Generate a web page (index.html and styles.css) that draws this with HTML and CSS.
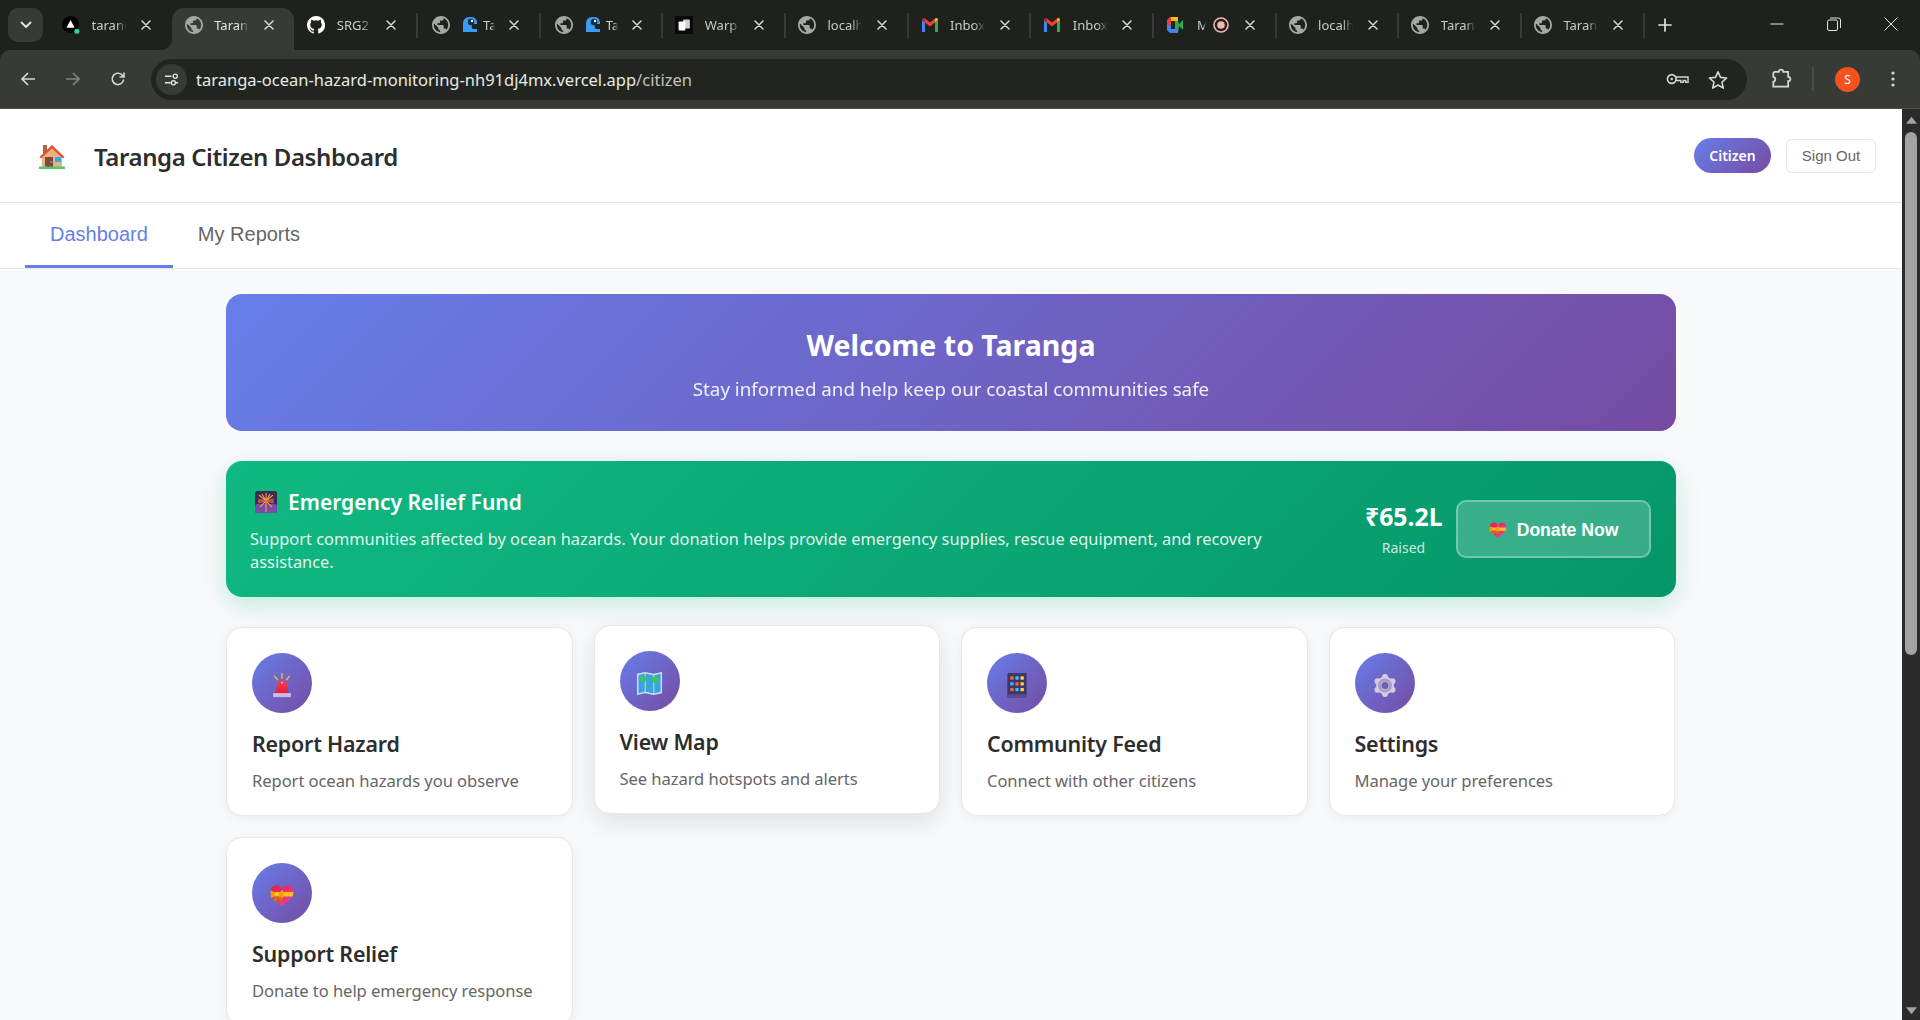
FILE: index.html
```html
<!DOCTYPE html>
<html lang="en">
<head>
<meta charset="utf-8">
<title>Taranga Citizen Dashboard</title>
<link rel="stylesheet" href="styles.css">
</head>
<body>
<svg class="defs" aria-hidden="true">
  <defs>
    <symbol id="globe" viewBox="2 2 20 20">
      <path fill="#a6a8a6" fill-rule="evenodd" d="M12 2C6.480 2 2 6.480 2 12s4.480 10 10 10 10-4.480 10-10S17.520 2 12 2zm-1 17.930c-3.950-.490-7-3.850-7-7.930 0-.620.080-1.210.210-1.790L9 15v1c0 1.100.900 2 2 2v1.930zm6.900-2.540c-.260-.810-1-1.390-1.900-1.390h-1v-3c0-.550-.450-1-1-1H8v-2h2c.550 0 1-.450 1-1V7h2c1.100 0 2-.900 2-2v-.410c2.930 1.190 5 4.060 5 7.410 0 2.080-.800 3.970-2.100 5.390z"/>
    </symbol>
    <symbol id="close" viewBox="0 0 10 10">
      <path d="M1 1 9 9M9 1 1 9" stroke="#d8dad6" stroke-width="1.500" stroke-linecap="round" fill="none"/>
    </symbol>
    <symbol id="bird" viewBox="0 0 16 16">
      <path d="M1 15V6a6 6 0 0 1 6-6h2a6 6 0 0 1 6 5v2h-4a3 3 0 0 0 0 5h4v3Z" fill="#3b9bf0"/>
      <circle cx="9" cy="5" r="3.200" fill="#0e2a44"/>
      <circle cx="10" cy="4" r="1.200" fill="#fff"/>
    </symbol>
    <symbol id="gmail" viewBox="0 0 18 16">
      <path d="M1 15V3l3 2.400V15Z" fill="#4285f4"/>
      <path d="M14 15V5.400L17 3v12Z" fill="#34a853"/>
      <path d="M4 5.400 9 9.400 14 5.400V1.600L9 5.500 4 1.600Z" fill="#ea4335"/>
      <path d="M1 3C1 1 3 .600 4 1.600V5.400Z" fill="#c5221f"/>
      <path d="M17 3C17 1 15 .600 14 1.600V5.400Z" fill="#fbbc04"/>
    </symbol>
    <symbol id="heart" viewBox="0 0 24 22">
      <path d="M12 21.500C5 16.500.500 12.500.500 7A6 6 0 0 1 12 4.500 6 6 0 0 1 23.500 7C23.500 12.500 19 16.500 12 21.500Z" fill="url(#heartFill)"/>
      <path d="M.600 7.500H23.400L22.900 12H1.400Z" fill="#fbbf24"/>
      <path d="M7 9.700 .800 5.500V14ZM7 9.700 13 5V14.500Z" fill="#f59e0b"/>
      <path d="M6.500 10 2.500 17 5.500 16 6.500 18 7.500 12 10.500 17.500 11.500 15.500 13 16Z" fill="#d97706"/>
      <circle cx="7" cy="9.700" r="1.600" fill="#fcd34d"/>
    </symbol>
    <linearGradient id="heartFill" x1="0" y1="0" x2="1" y2="1">
      <stop offset="0" stop-color="#e11d48"/>
      <stop offset="1" stop-color="#ec4899"/>
    </linearGradient>
    <linearGradient id="sirenFill" x1="0" y1="0" x2="0" y2="1">
      <stop offset="0" stop-color="#ff3b4e"/>
      <stop offset="1" stop-color="#dc1f3c"/>
    </linearGradient>
  </defs>
</svg>

<div class="browser">
  <div class="tabstrip">
    <button class="tab-search" aria-label="Search tabs">
      <svg width="12" height="8" viewBox="0 0 12 8"><path d="M1.500 1.500 6 6l4.500-4.500" stroke="#e3e5e1" stroke-width="1.800" fill="none" stroke-linecap="round" stroke-linejoin="round"/></svg>
    </button>
    <div class="tabs">
      <div class="tab no-sep">
        <svg class="fav" viewBox="0 0 20 20"><circle cx="9.500" cy="9.500" r="9.500" fill="#000"/><path d="M9.500 4.500 14 13H5Z" fill="#fff"/><circle cx="16.500" cy="17" r="2.800" fill="#2dd4a8"/></svg>
        <span class="tab-title">tarang</span>
        <svg class="tab-x"><use href="#close"/></svg>
      </div>
      <div class="tab active">
        <svg class="fav"><use href="#globe"/></svg>
        <span class="tab-title">Taranga</span>
        <svg class="tab-x"><use href="#close"/></svg>
      </div>
      <div class="tab">
        <svg class="fav" viewBox="0 0 16 16"><path fill="#fff" d="M8 0a8 8 0 0 0-2.530 15.590c.400.070.550-.170.550-.380v-1.340c-2.230.480-2.700-1.070-2.700-1.070-.360-.930-.890-1.170-.890-1.170-.730-.500.060-.490.060-.490.800.060 1.230.830 1.230.830.710 1.220 1.870.870 2.330.660.070-.520.280-.870.510-1.070-1.780-.200-3.640-.890-3.640-3.950 0-.870.310-1.590.820-2.150-.080-.200-.360-1.020.080-2.120 0 0 .670-.210 2.200.820a7.600 7.600 0 0 1 4 0c1.530-1.040 2.200-.820 2.200-.820.440 1.100.160 1.920.080 2.120.510.560.820 1.270.820 2.150 0 3.070-1.870 3.750-3.650 3.950.290.250.540.730.540 1.480v2.200c0 .210.150.460.550.380A8 8 0 0 0 8 0Z"/></svg>
        <span class="tab-title">SRG2</span>
        <svg class="tab-x"><use href="#close"/></svg>
      </div>
      <div class="tab wide-icons">
        <svg class="fav"><use href="#globe"/></svg>
        <svg class="fav second"><use href="#bird"/></svg>
        <span class="tab-title narrow">Taranga</span>
        <svg class="tab-x"><use href="#close"/></svg>
      </div>
      <div class="tab wide-icons">
        <svg class="fav"><use href="#globe"/></svg>
        <svg class="fav second"><use href="#bird"/></svg>
        <span class="tab-title narrow">Taranga</span>
        <svg class="tab-x"><use href="#close"/></svg>
      </div>
      <div class="tab">
        <svg class="fav" viewBox="0 0 20 20"><rect width="20" height="20" fill="#0a0a0a"/><rect x="9" y="4" width="7.500" height="10" rx="1" fill="#cfcfcf"/><rect x="4" y="6" width="7.500" height="10" rx="1" fill="#fff"/></svg>
        <span class="tab-title">Warp</span>
        <svg class="tab-x"><use href="#close"/></svg>
      </div>
      <div class="tab">
        <svg class="fav"><use href="#globe"/></svg>
        <span class="tab-title">localhost</span>
        <svg class="tab-x"><use href="#close"/></svg>
      </div>
      <div class="tab">
        <svg class="fav"><use href="#gmail"/></svg>
        <span class="tab-title">Inbox</span>
        <svg class="tab-x"><use href="#close"/></svg>
      </div>
      <div class="tab">
        <svg class="fav"><use href="#gmail"/></svg>
        <span class="tab-title">Inbox</span>
        <svg class="tab-x"><use href="#close"/></svg>
      </div>
      <div class="tab">
        <svg class="fav" viewBox="0 0 18 16"><path d="M4 0H12V4H5V8H1V3Z" fill="#ea4335"/><path d="M1 8H5V12H12V16H4L1 13Z" fill="#4285f4"/><path d="M5 0H12V4H5Z" fill="#fbbc04"/><path d="M12 4 13 7 17 3V13L13 9 12 16V12H9V4Z" fill="#34a853"/><path d="M5 4H9V12H5Z" fill="#1e211c"/></svg>
        <span class="tab-title tiny">Meet</span>
        <svg class="rec" viewBox="0 0 16 16"><circle cx="8" cy="8" r="7" fill="none" stroke="#f5b5ae" stroke-width="1.600"/><circle cx="8" cy="8" r="3.800" fill="#f5b5ae"/></svg>
        <svg class="tab-x"><use href="#close"/></svg>
      </div>
      <div class="tab">
        <svg class="fav"><use href="#globe"/></svg>
        <span class="tab-title">localhost</span>
        <svg class="tab-x"><use href="#close"/></svg>
      </div>
      <div class="tab">
        <svg class="fav"><use href="#globe"/></svg>
        <span class="tab-title">Taranga</span>
        <svg class="tab-x"><use href="#close"/></svg>
      </div>
      <div class="tab">
        <svg class="fav"><use href="#globe"/></svg>
        <span class="tab-title">Taranga</span>
        <svg class="tab-x"><use href="#close"/></svg>
      </div>
    </div>
    <svg class="new-tab" viewBox="0 0 14 14"><path d="M7 1v12M1 7h12" stroke="#e3e5e1" stroke-width="1.700" stroke-linecap="round"/></svg>
    <div class="window-controls">
      <svg viewBox="0 0 14 14"><path d="M.500 7h13" stroke="#e3e5e1"/></svg>
      <svg viewBox="0 0 14 14"><rect x=".500" y="3" width="10" height="10.500" rx="1.500" fill="none" stroke="#e3e5e1"/><path d="M3 1H11.500A2 2 0 0 1 13.500 3V11" fill="none" stroke="#e3e5e1"/></svg>
      <svg viewBox="0 0 14 14"><path d="M.500.500l13 13M13.500.500l-13 13" stroke="#e3e5e1"/></svg>
    </div>
  </div>

  <div class="toolbar">
    <div class="nav-buttons">
      <svg viewBox="0 0 16 16"><path d="M15 8H2M8 2 2 8l6 6" stroke="#d5d7d3" stroke-width="1.700" fill="none"/></svg>
      <svg viewBox="0 0 16 16"><path d="M1 8H14M8 2l6 6-6 6" stroke="#80837e" stroke-width="1.700" fill="none"/></svg>
      <svg viewBox="0 0 16 16"><path d="M13.600 8.500A5.700 5.700 0 1 1 11.800 3.700L14 6M14 1.500V6H9.500" stroke="#d5d7d3" stroke-width="1.600" fill="none"/></svg>
    </div>
    <div class="omnibox">
      <span class="site-info">
        <svg viewBox="0 0 16 16"><path d="M1 4.500H8M12 11.500H15M1 11.500H7" stroke="#e3e5e1" stroke-width="1.500"/><circle cx="12" cy="4.500" r="2.200" fill="none" stroke="#e3e5e1" stroke-width="1.400"/><circle cx="10" cy="11.500" r="2.200" fill="none" stroke="#e3e5e1" stroke-width="1.400"/></svg>
      </span>
      <span class="url">taranga-ocean-hazard-monitoring-nh91dj4mx.vercel.app<span class="url-path">/citizen</span></span>
      <svg class="omni-key" viewBox="0 0 24 14"><circle cx="6" cy="7" r="4.500" fill="none" stroke="#d5d7d3" stroke-width="1.700"/><circle cx="6" cy="7" r="1.300" fill="#d5d7d3"/><path d="M10.500 5H23V10.500H20.500V8.500H18V10.500H15.500V8.500H10.500" fill="none" stroke="#d5d7d3" stroke-width="1.500"/></svg>
      <svg class="omni-star" viewBox="0 0 20 20"><path d="M10 1.800 12.500 7.400 18.600 8 14 12.100 15.300 18.100 10 15 4.700 18.100 6 12.100 1.400 8 7.500 7.400Z" fill="none" stroke="#d5d7d3" stroke-width="1.600" stroke-linejoin="round"/></svg>
    </div>
    <div class="toolbar-end">
      <svg class="ext" viewBox="0 0 20 20"><path d="M7 3.500H8A2 2 0 0 1 12 3.500H16.500V8A2 2 0 0 1 16.500 12V17H3V12.500A2.300 2.300 0 0 0 3 8V5A1.500 1.500 0 0 1 4.500 3.500Z" fill="none" stroke="#d5d7d3" stroke-width="1.600"/></svg>
      <span class="tool-sep"></span>
      <span class="avatar">S</span>
      <svg class="menu-dots" viewBox="0 0 4 16"><circle cx="2" cy="2" r="1.600" fill="#d5d7d3"/><circle cx="2" cy="8" r="1.600" fill="#d5d7d3"/><circle cx="2" cy="14" r="1.600" fill="#d5d7d3"/></svg>
    </div>
  </div>

  <div class="viewport">
    <div class="page">
      <header class="app-header">
        <div class="brand">
          <svg class="brand-icon" viewBox="0 0 26 25">
            <rect x="4" y="1" width="4" height="8" fill="#a9673f"/>
            <path d="M3 12 13 3 23 12V23H3Z" fill="#e9b383"/>
            <path d="M.500 13 13 1 25.500 13 24 14.500 13 4.500 2 14.500Z" fill="#e5532d"/>
            <rect x="6" y="13" width="8" height="10" fill="#7b4a3c"/>
            <circle cx="12" cy="18" r=".800" fill="#e9b383"/>
            <rect x="16" y="13" width="6" height="5" fill="#35a9ee"/>
            <rect y="22.500" width="26" height="2.500" fill="#4ccc6f"/>
          </svg>
          <h1 class="brand-title">Taranga Citizen Dashboard</h1>
        </div>
        <div class="user-area">
          <span class="role-pill">Citizen</span>
          <button class="sign-out">Sign Out</button>
        </div>
      </header>

      <nav class="app-nav">
        <button class="nav-tab current">Dashboard</button>
        <button class="nav-tab">My Reports</button>
      </nav>

      <main class="content">
        <section class="welcome">
          <h2 class="welcome-title">Welcome to Taranga</h2>
          <p class="welcome-sub">Stay informed and help keep our coastal communities safe</p>
        </section>

        <section class="relief">
          <div class="relief-text">
            <h3 class="relief-title">
              <svg class="firework" viewBox="0 0 22 22">
                <rect width="22" height="22" rx="2.500" fill="#3d2a55"/>
                <rect y="13" width="22" height="9" rx="2" fill="#7c4aa8"/>
                <path d="M11 21V10M11 10 4 4M11 10 18 4M11 10 3 10M11 10 19 10M11 10 11 2M11 10 5 16M11 10 17 16M11 10 7 3M11 10 15 3" stroke="#e9a23b" stroke-width="1.100"/>
                <path d="M3 8 19 12M3 12 19 8" stroke="#f0476e" stroke-width=".900"/>
              </svg>
              Emergency Relief Fund
            </h3>
            <p class="relief-desc">Support communities affected by ocean hazards. Your donation helps provide emergency supplies, rescue equipment, and recovery assistance.</p>
          </div>
          <div class="relief-actions">
            <div class="raised">
              <div class="raised-amount">₹65.2L</div>
              <div class="raised-label">Raised</div>
            </div>
            <button class="donate">
              <svg class="donate-heart"><use href="#heart"/></svg>
              Donate Now
            </button>
          </div>
        </section>

        <section class="cards">
          <article class="card">
            <div class="card-icon">
              <svg class="emoji" viewBox="0 0 24 28">
                <path d="M12 .500V6M3.500 3.500 7 7.500M20.500 3.500 17 7.500" stroke="#fbbf24" stroke-width="1.500" stroke-linecap="round"/>
                <path d="M5 23 6.500 13C7 10 9 8.500 12 8.500S17 10 17.500 13L19 23Z" fill="url(#sirenFill)"/>
                <circle cx="12" cy="11" r="1.100" fill="#ffb3bb"/>
                <rect x="2" y="22.500" width="20" height="4.500" fill="#c9b9e6"/>
              </svg>
            </div>
            <h4 class="card-title">Report Hazard</h4>
            <p class="card-desc">Report ocean hazards you observe</p>
          </article>
          <article class="card raised-card">
            <div class="card-icon">
              <svg class="emoji map" viewBox="0 0 28 25">
                <path d="M1 2.500 9.500 .500 18.500 2.500 27 .500V22.500L18.500 24.500 9.500 22.500 1 24.500Z" fill="#d9dde8"/>
                <path d="M2.500 3.700 9 2.200V21L2.500 22.500ZM10 2.200 18 4V22.800L10 21ZM19 4 25.500 2.500V21L19 22.800Z" fill="#38a3e8"/>
                <path d="M4 6 9 4.500 11 6.500 10 10 8.500 13 6.500 10 4.500 9ZM16 6 22 5 24 8 21.500 11 21 15 18.500 12 15.500 10ZM10 15 12.500 14.500 13 19 11 18Z" fill="#3fc45f"/>
              </svg>
            </div>
            <h4 class="card-title">View Map</h4>
            <p class="card-desc">See hazard hotspots and alerts</p>
          </article>
          <article class="card">
            <div class="card-icon">
              <svg class="emoji" viewBox="0 0 20 26">
                <rect width="20" height="26" rx="1.500" fill="#3f3769"/>
                <rect y="22" width="20" height="4" rx="1" fill="#5c4a92"/>
                <g fill="#f0653a"><rect x="3" y="3.500" width="3.500" height="3.500" rx=".700"/><rect x="3" y="15.500" width="3.500" height="3.500" rx=".700"/></g>
                <g fill="#38bdf8"><rect x="8.300" y="3.500" width="3.500" height="3.500" rx=".700"/><rect x="3" y="9.500" width="3.500" height="3.500" rx=".700"/><rect x="8.300" y="15.500" width="3.500" height="3.500" rx=".700"/></g>
                <g fill="#fcd34d"><rect x="13.600" y="3.500" width="3.500" height="3.500" rx=".700"/><rect x="13.600" y="9.500" width="3.500" height="3.500" rx=".700"/><rect x="13.600" y="15.500" width="3.500" height="3.500" rx=".700"/></g>
                <rect x="8.300" y="9.500" width="3.500" height="3.500" rx=".700" fill="#f0653a"/>
              </svg>
            </div>
            <h4 class="card-title">Community Feed</h4>
            <p class="card-desc">Connect with other citizens</p>
          </article>
          <article class="card">
            <div class="card-icon">
              <svg class="emoji" viewBox="0 0 24 24">
                <g fill="#d3cbe8">
                  <circle cx="12" cy="3.500" r="3"/><circle cx="12" cy="20.500" r="3"/>
                  <circle cx="4.500" cy="7.700" r="3"/><circle cx="19.500" cy="7.700" r="3"/>
                  <circle cx="4.500" cy="16.300" r="3"/><circle cx="19.500" cy="16.300" r="3"/>
                  <circle cx="12" cy="12" r="9"/>
                </g>
                <circle cx="12" cy="12" r="5.500" fill="none" stroke="#a79fbd" stroke-width="3"/>
                <circle cx="12" cy="12" r="3.500" fill="#6d5fb8"/>
              </svg>
            </div>
            <h4 class="card-title">Settings</h4>
            <p class="card-desc">Manage your preferences</p>
          </article>
          <article class="card">
            <div class="card-icon">
              <svg class="emoji"><use href="#heart"/></svg>
            </div>
            <h4 class="card-title">Support Relief</h4>
            <p class="card-desc">Donate to help emergency response</p>
          </article>
        </section>
      </main>
    </div>
    <div class="scrollbar">
      <svg class="scroll-arrow" viewBox="0 0 12 8"><path d="M6 .500 12 8H0Z" fill="#a3a3a3"/></svg>
      <div class="scroll-track"><div class="scroll-thumb"></div></div>
      <svg class="scroll-arrow" viewBox="0 0 12 8"><path d="M6 7.500 12 0H0Z" fill="#a3a3a3"/></svg>
    </div>
  </div>
</div>
</body>
</html>
```
FILE: styles.css
```css
* { box-sizing: border-box; }
html, body { margin: 0; height: 100%; overflow: hidden; }
body { font-family: "Noto Sans", "Open Sans", sans-serif; background: #1e211c; }
.defs { position: absolute; width: 0; height: 0; }

.browser { display: flex; flex-direction: column; height: 1020px; }

/* tab strip */
.tabstrip { display: flex; align-items: flex-start; height: 50px; background: #1e211c; padding-left: 8px; position: relative; }
.tab-search { width: 35px; height: 34px; margin-top: 8px; border: 0; border-radius: 10px; background: #383b35; display: flex; align-items: center; justify-content: center; padding: 0; }
.tabs { display: flex; margin-left: 6px; }
.tab { position: relative; width: 122.670px; height: 42px; margin-top: 8px; display: flex; align-items: center; padding: 0 0 8px 13px; color: #c9cbc7; font-size: 13px; }
.tab::after { content: ""; position: absolute; right: -1px; top: 5px; width: 2px; height: 25px; background: #383b35; }
.tab.no-sep::after, .tab.active::after { display: none; }
.tab.wide-icons { padding-left: 15px; }
.tab.active { background: #383b35; border-radius: 12px 12px 0 0; color: #e3e5e1; }
.tab.active::before { content: ""; position: absolute; left: -12px; bottom: 0; width: 12px; height: 12px; background: radial-gradient(circle at 0 0, transparent 12px, #383b35 12.500px); }
.fav { width: 18px; height: 18px; flex: none; }
.fav.second { width: 16px; height: 16px; margin-left: 12px; }
.tab-title { margin-left: 11.500px; width: 35px; white-space: nowrap; overflow: hidden; flex: none; -webkit-mask-image: linear-gradient(90deg, #000 70%, transparent); mask-image: linear-gradient(90deg, #000 70%, transparent); }
.tab-title.narrow { margin-left: 5px; width: 12px; }
.tab-title.tiny { margin-left: 13px; width: 9px; }
.rec { width: 16px; height: 16px; flex: none; margin-left: 7px; }
.tab-x { width: 10px; height: 10px; position: absolute; left: 92px; top: 12px; }
.new-tab { width: 14px; height: 14px; margin: 18px 0 0 14px; flex: none; }
.window-controls { position: absolute; right: 22px; top: 17px; display: flex; gap: 43px; }
.window-controls svg { width: 14px; height: 14px; }

/* toolbar */
.toolbar { height: 59px; flex: none; background: #383b35; border-radius: 10px 10px 0 0; border-bottom: 1px solid #4a4d47; display: flex; align-items: center; padding: 0 0 0 20px; }
.nav-buttons { display: flex; gap: 29px; width: 131px; flex: none; }
.nav-buttons svg { width: 16px; height: 16px; }
.omnibox { width: 1596px; height: 41px; flex: none; border-radius: 21px; background: #22251f; display: flex; align-items: center; padding-left: 5px; position: relative; }
.site-info { width: 31px; height: 31px; border-radius: 50%; background: #383b35; display: flex; align-items: center; justify-content: center; flex: none; }
.site-info svg { width: 15px; height: 15px; }
.url { margin-left: 9px; font-size: 16.500px; color: #e8eae6; white-space: nowrap; }
.url-path { color: #c0c2be; }
.omni-key { position: absolute; right: 58px; top: 13px; width: 23px; height: 14px; }
.omni-star { position: absolute; right: 19px; top: 11px; width: 20px; height: 20px; }
.toolbar-end { display: flex; align-items: center; flex: none; margin-left: 23px; }
.ext { width: 22px; height: 22px; }
.tool-sep { width: 2px; height: 24px; background: #4c4f49; margin-left: 20px; }
.avatar { width: 25px; height: 25px; margin-left: 21px; border-radius: 50%; background: #f4511e; color: #fff; font-size: 12px; display: flex; align-items: center; justify-content: center; }
.menu-dots { width: 4px; height: 16px; margin-left: 31px; }

/* page */
.viewport { flex: 1; display: flex; min-height: 0; background: #f8f9fa; }
.page { flex: 1; min-width: 0; overflow: hidden; }
.scrollbar { width: 18px; flex: none; background: #2b2b2b; display: flex; flex-direction: column; align-items: center; padding: 7px 0 5px; }
.scroll-arrow { width: 11px; height: 8px; flex: none; }
.scroll-track { flex: 1; width: 100%; padding: 8px 3px 0; }
.scroll-thumb { height: 523px; border-radius: 6px; background: #a3a3a3; }

.app-header { height: 94px; background: #fff; border-bottom: 1px solid #e2e4e8; display: flex; align-items: center; justify-content: space-between; padding: 0 26px 0 39px; }
.brand { display: flex; align-items: center; padding-top: 2px; }
.brand-icon { width: 26px; height: 25px; flex: none; }
.brand-title { margin: 0 0 0 29px; font-size: 24px; font-weight: 600; color: #2d2d2d; letter-spacing: -.400px; }
.user-area { display: flex; align-items: center; gap: 15px; }
.role-pill { width: 77px; height: 35px; border-radius: 18px; background: linear-gradient(135deg, #667eea, #764ba2); color: #fff; font-size: 14px; font-weight: 600; display: flex; align-items: center; justify-content: center; }
.sign-out { width: 90px; height: 34px; border: 1px solid #e5e7eb; border-radius: 6px; background: #fff; color: #666; font-family: "Liberation Sans", sans-serif; font-size: 15px; padding: 0 0 1px; }

.app-nav { height: 66px; background: #fff; border-bottom: 1px solid #e5e7eb; display: flex; padding-left: 25px; }
.nav-tab { border: 0; border-bottom: 3px solid transparent; background: none; padding: 0 25px; height: 65px; font-family: "Liberation Sans", sans-serif; font-size: 20px; color: #666; }
.nav-tab.current { color: #667eea; border-bottom-color: #667eea; }

.content { width: 1450px; margin: 0 auto; padding-top: 25px; }

.welcome { height: 137px; border-radius: 16px; background: linear-gradient(135deg, #667eea, #764ba2); color: #fff; text-align: center; padding-top: 30px; }
.welcome-title { margin: 0; font-size: 28.500px; line-height: 42px; font-weight: 700; }
.welcome-sub { margin: 9px 0 0; font-size: 18.750px; line-height: 28px; opacity: .9; }

.relief { margin-top: 30px; height: 136px; border-radius: 16px; background: linear-gradient(135deg, #10b981, #059669); box-shadow: 0 8px 25px rgba(16, 185, 129, .22); color: #fff; display: flex; align-items: center; padding: 0 25px 0 24px; }
.relief-text { flex: 1; min-width: 0; margin-right: 70px; padding-top: 1px; }
.relief-title { margin: 0; display: flex; align-items: center; gap: 11px; font-size: 21px; line-height: 30px; font-weight: 600; padding-left: 5px; }
.firework { width: 22px; height: 22px; flex: none; }
.relief-desc { margin: 10px 0 0; font-size: 16.400px; line-height: 23px; color: rgba(255, 255, 255, .9); }
.relief-actions { display: flex; align-items: center; gap: 14px; flex: none; }
.raised { text-align: center; width: 77px; }
.raised-amount { font-size: 24.800px; line-height: 34px; font-weight: 700; }
.raised-label { font-size: 14px; line-height: 22px; margin-top: 4px; color: rgba(255, 255, 255, .8); }
.donate { width: 195px; height: 58px; border: 2px solid rgba(255, 255, 255, .3); border-radius: 10px; background: rgba(255, 255, 255, .2); color: #fff; font-family: "Liberation Sans", sans-serif; font-size: 17.600px; font-weight: 700; display: flex; align-items: center; justify-content: center; gap: 10px; padding: 2px 0 0; }
.donate-heart { width: 18px; height: 16px; }

.cards { display: grid; grid-template-columns: repeat(4, 346.500px); gap: 21px; margin-top: 30px; }
.card { height: 189px; background: #fff; border: 1px solid #e5e7eb; border-radius: 16px; padding: 25px 25px 24px; box-shadow: 0 2px 10px rgba(0, 0, 0, .06); }
.raised-card { transform: translateY(-2px); box-shadow: 0 8px 25px rgba(0, 0, 0, .1); }
.card-icon { width: 60px; height: 60px; border-radius: 50%; background: linear-gradient(135deg, #667eea, #764ba2); display: flex; align-items: center; justify-content: center; padding-top: 4px; }
.emoji { width: 24px; height: 25px; }
.emoji.map { width: 27px; }
.card-title { margin: 14px 0 0; font-size: 21.400px; line-height: 34px; font-weight: 600; color: #2d2d2d; letter-spacing: -.200px; }
.card-desc { margin: 7px 0 0; font-size: 16.600px; line-height: 26px; color: #666; letter-spacing: -.080px; }
```
